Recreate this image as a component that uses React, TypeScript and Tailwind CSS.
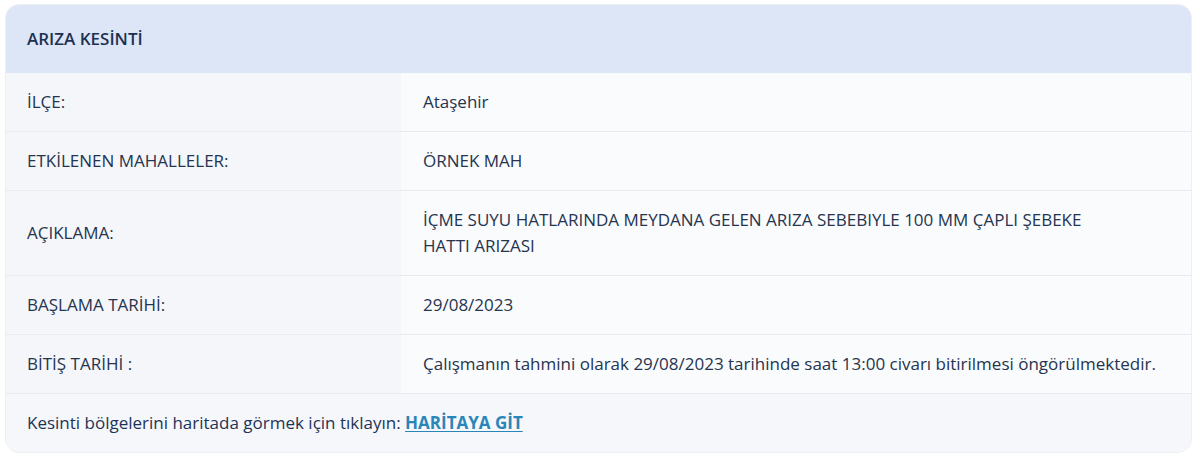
import React from 'react'

const rows: { label: string; value: string; narrow?: boolean }[] = [
  { label: 'İLÇE:', value: 'Ataşehir' },
  { label: 'ETKİLENEN MAHALLELER:', value: 'ÖRNEK MAH' },
  {
    label: 'AÇIKLAMA:',
    value: 'İÇME SUYU HATLARINDA MEYDANA GELEN ARIZA SEBEBIYLE 100 MM ÇAPLI ŞEBEKE HATTI ARIZASI',
    narrow: true,
  },
  { label: 'BAŞLAMA TARİHİ:', value: '29/08/2023' },
  {
    label: 'BİTİŞ TARİHİ :',
    value: 'Çalışmanın tahmini olarak 29/08/2023 tarihinde saat 13:00 civarı bitirilmesi öngörülmektedir.',
  },
]

export default function App() {
  return (
    <div className="min-h-[459px] bg-white px-[5px] pt-[4px] font-['Open_Sans',sans-serif] text-[17px] text-[#25344f]">
      <div className="w-[1187px] overflow-hidden rounded-[14px] border border-[#eceff5] bg-[#f5f7fb]">
        <div className="flex h-[68px] items-center bg-[#dde6f6] px-[21px] text-[17px] font-semibold text-[#1b3052]">
          ARIZA KESİNTİ
        </div>
        {rows.map((r) => (
          <div key={r.label} className="flex border-b border-[#e6eaf1]">
            <div className="flex w-[395px] shrink-0 items-center bg-[#f4f6fa] px-[21px] py-4 leading-[26px]">
              {r.label}
            </div>
            <div className="flex flex-1 items-center bg-[#fafbfd] pl-[22px] pr-[20px] py-4 leading-[26px]">
              <span className={r.narrow ? 'max-w-[700px]' : 'max-w-[760px]'}>{r.value}</span>
            </div>
          </div>
        ))}
        <div className="flex h-[58px] items-center bg-[#f5f7fb] px-[21px] text-[#1e3457]">
          <span>
            Kesinti bölgelerini haritada görmek için tıklayın:{' '}
            <a href="#" className="font-bold text-[#2a86b8] underline underline-offset-2">
              HARİTAYA GİT
            </a>
          </span>
        </div>
      </div>
    </div>
  )
}
